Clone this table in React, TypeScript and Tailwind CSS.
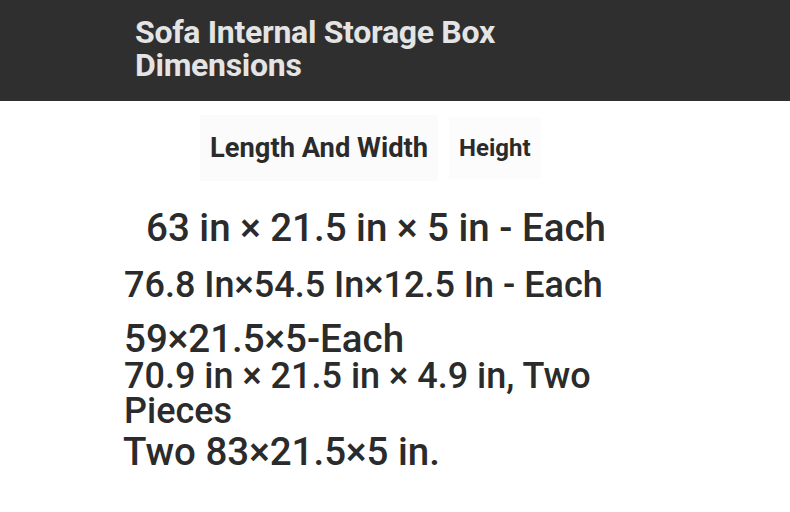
const rows = [
  { text: '63 in × 21.5 in × 5 in - Each', cls: 'pl-[146px] text-[38.5px] leading-[56px]' },
  { text: '76.8 In×54.5 In×12.5 In - Each', cls: 'pl-[124px] text-[36px] leading-[58px]' },
  { text: '59×21.5×5-Each', cls: 'mt-[5px] pl-[124px] text-[38.5px] leading-[40px]' },
  { text: '70.9 in × 21.5 in × 4.9 in, Two Pieces', cls: 'pl-[124px] pr-[180px] text-[36px] leading-[35px]' },
  { text: 'Two 83×21.5×5 in.', cls: 'pl-[123px] text-[38.5px] leading-[46px]' },
];

export default function App() {
  return (
    <div className="w-[790px] h-[512px] bg-white font-['Roboto',sans-serif] text-[#2b2b2b]">
      <header className="h-[101px] bg-[#2f2f2f] pl-[135px] pt-[16px]">
        <h1 className="w-[420px] text-[32px] leading-[33px] font-bold text-[#e4e4e4] tracking-[-0.3px]">
          Sofa Internal Storage Box Dimensions
        </h1>
      </header>
      <nav className="flex items-center pl-[200px] pt-[14px] h-[80px]">
        <div className="h-[66px] px-[10px] flex items-center bg-[#fbfbfb] text-[27.3px] font-bold">
          Length And Width
        </div>
        <div className="ml-[11px] h-[62px] px-[10px] flex items-center bg-[#fcfcfc] text-[24px] font-bold">
          Height
        </div>
      </nav>
      <section className="pt-[19px] font-medium">
        {rows.map(r => (
          <div key={r.text} className={r.cls}>
            {r.text}
          </div>
        ))}
      </section>
    </div>
  );
}
